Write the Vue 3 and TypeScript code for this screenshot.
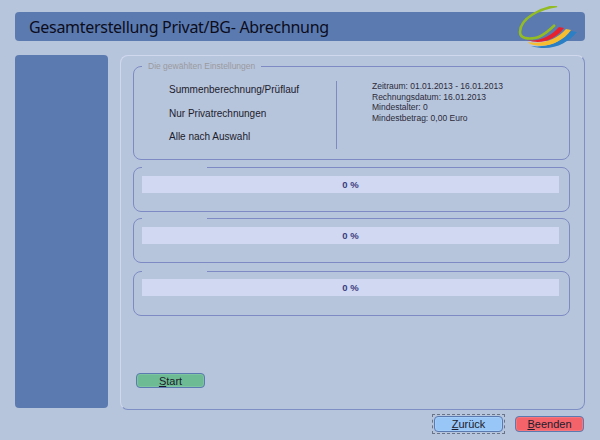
<template>
  <div class="window">
    <header class="title-bar">
      <h1>Gesamterstellung Privat/BG- Abrechnung</h1>
      <svg class="logo" width="62" height="46" viewBox="0 0 62 46" fill="none">
        <path d="M14 40 C30 42 44 36 54 25 L60 26 C50 38 34 46 14 40 Z" fill="#2b7fc4" />
        <path d="M11 36 C26 39 40 33 49 23 L54 24 C45 37 28 43 13 38 Z" fill="#f7bd2e" />
        <path d="M10 34 C22 36 34 30 42 21 L47 22 C38 34 24 39 10 34 Z" fill="#e8202e" />
        <path d="M40 0 C24 2 3 12 3 26 C3 33 12 33 18 32 C26 31 32 24 38 19" stroke="#93bb22" stroke-width="2.6" />
      </svg>
    </header>
    <div class="columns">
      <aside class="sidebar"></aside>
      <main class="panel">
        <fieldset class="group summary">
          <legend>Die gewählten Einstellungen</legend>
          <div class="options">
            <div v-for="option in options" :key="option">{{ option }}</div>
          </div>
          <div class="details">
            <div v-for="line in details" :key="line">{{ line }}</div>
          </div>
        </fieldset>
        <fieldset v-for="bar in bars" :key="bar" class="group progress">
          <legend class="blank">&nbsp;</legend>
          <div class="bar">0 %</div>
        </fieldset>
        <button class="btn start"><u>S</u>tart</button>
      </main>
    </div>
    <footer class="actions">
      <span class="focus"><button class="btn back"><u>Z</u>urück</button></span>
      <button class="btn quit"><u>B</u>eenden</button>
    </footer>
  </div>
</template>

<script setup lang="ts">
const options: string[] = ["Summenberechnung/Prüflauf", "Nur Privatrechnungen", "Alle nach Auswahl"];
const details: string[] = [
  "Zeitraum: 01.01.2013 - 16.01.2013",
  "Rechnungsdatum: 16.01.2013",
  "Mindestalter: 0",
  "Mindestbetrag: 0,00 Euro",
];
const bars: number[] = [1, 2, 3];
</script>

<style>
html,
body {
  margin: 0;
  background: #b7c5dc;
}
</style>

<style scoped>
.window {
  width: 600px;
  height: 440px;
  box-sizing: border-box;
  padding: 12px 15px 0;
  background: #b7c5dc;
  font-family: "Liberation Sans", Arial, sans-serif;
  color: #1c1c2c;
  overflow: hidden;
}
.title-bar {
  position: relative;
  height: 29px;
  background: #5b7bb0;
  border-radius: 4px;
  display: flex;
  align-items: center;
  padding-left: 14px;
}
h1 {
  margin: 0;
  font-family: "Noto Sans", sans-serif;
  font-size: 16px;
  font-weight: 400;
  letter-spacing: -0.3px;
  color: #0c0c1c;
  white-space: nowrap;
}
.logo {
  position: absolute;
  left: 502px;
  top: -6px;
}
.columns {
  display: flex;
  gap: 12px;
  margin-top: 14px;
  height: 355px;
}
.sidebar {
  width: 93px;
  height: 353px;
  background: #5b7bb0;
  border-radius: 4px;
}
.panel {
  position: relative;
  flex: 1;
  box-sizing: border-box;
  border: 1px solid #7d8fc4;
  border-top-color: #d0d8ee;
  border-left-color: #d0d8ee;
  border-radius: 8px;
  padding: 5px 14px 0 12px;
  display: flex;
  flex-direction: column;
  gap: 1px;
}
.group {
  margin: 0;
  min-width: 0;
  border: 1px solid #7d8ac4;
  border-radius: 8px;
  box-sizing: border-box;
  padding: 0;
}
.group legend {
  margin-left: 8px;
  padding: 0 6px;
  font-size: 8.5px;
  line-height: 10px;
  color: #9a9a9e;
}
.group legend.blank {
  width: 65px;
  box-sizing: border-box;
  margin-left: 0;
  padding: 0;
}
.summary {
  height: 99px;
  margin-bottom: 1px;
  display: flex;
  flex-shrink: 0;
}
.options {
  width: 167px;
  height: 65px;
  margin-top: 10px;
  padding: 3px 0 0 35px;
  box-sizing: content-box;
  border-right: 1px solid #7d8ac4;
  font-size: 10px;
  line-height: 12px;
  display: flex;
  flex-direction: column;
  gap: 11.5px;
}
.details {
  margin: 10px 0 0 35px;
  font-size: 8.5px;
  line-height: 10.6px;
  color: #2a2a3a;
}
.progress {
  height: 50px;
  flex-shrink: 0;
  padding: 0 10px 0 8px;
}
.progress:last-of-type {
  margin-top: 2px;
}
.bar {
  height: 17px;
  margin-top: 4px;
  background: #d0d8f2;
  color: #3c3c80;
  font-size: 9.5px;
  font-weight: 700;
  line-height: 17px;
  text-align: center;
}
.progress:last-of-type .bar {
  margin-top: 3px;
}
.btn {
  box-sizing: border-box;
  padding: 0;
  border: 1px solid #5b7bb0;
  border-radius: 4px;
  font-family: inherit;
  font-size: 11px;
  color: #1c1c2c;
  box-shadow: inset 0 0 0 1px rgba(255, 255, 255, 0.12);
}
.start {
  position: absolute;
  left: 15px;
  top: 317px;
  width: 69px;
  height: 15px;
  background: #6dbb94;
}
.actions {
  display: flex;
  justify-content: flex-end;
  align-items: center;
  gap: 10px;
  padding-right: 1px;
  margin-top: 4px;
}
.focus {
  display: flex;
  padding: 1px;
  border: 1px dashed #6a7488;
}
.back {
  width: 69px;
  height: 16px;
  background: #98c6f6;
}
.quit {
  width: 69px;
  height: 16px;
  background: #f4636a;
}
</style>
